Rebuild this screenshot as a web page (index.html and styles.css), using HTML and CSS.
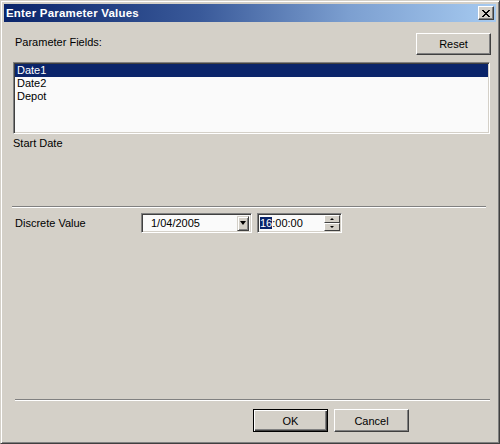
FILE: index.html
```html
<!DOCTYPE html>
<html>
<head>
<meta charset="utf-8">
<link rel="stylesheet" href="styles.css">
</head>
<body>
<div class="window">
  <div class="titlebar">
    <span class="title">Enter Parameter Values</span>
    <div class="close">
      <svg width="8" height="7" viewBox="0 0 8 7"><path d="M0 0h2v1h1v1h2v-1h1v-1h2v1h-1v1h-1v1h-1v1h1v1h1v1h1v1h-2v-1h-1v-1h-2v1h-1v1h-2v-1h1v-1h1v-1h1v-1h-1v-1h-1v-1h-1z" fill="#000"/></svg>
    </div>
  </div>
  <div class="content">
    <div class="toprow">
      <span class="label fields-label">Parameter Fields:</span>
      <div class="btn reset">Reset</div>
    </div>
    <div class="listbox">
      <div class="item selected">Date1</div>
      <div class="item">Date2</div>
      <div class="item">Depot</div>
    </div>
    <div class="label caption">Start Date</div>
    <div class="sep sep-top"></div>
    <div class="valuerow">
      <span class="label value-label">Discrete Value</span>
      <div class="field combo">
        <span class="combo-text">1/04/2005</span>
        <div class="dropbtn"><span class="tri-down"></span></div>
      </div>
      <div class="field timefield">
        <span class="time-text"><span class="hl">16</span>:00:00</span>
        <div class="spin">
          <div class="spinbtn"><span class="tri-up small"></span></div>
          <div class="spinbtn"><span class="tri-down small"></span></div>
        </div>
      </div>
    </div>
    <div class="filler"></div>
    <div class="sep sep-bottom"></div>
    <div class="buttons">
      <div class="btn default">OK</div>
      <div class="btn">Cancel</div>
    </div>
  </div>
</div>
</body>
</html>
```
FILE: styles.css
```css
html, body {
  margin: 0;
  padding: 0;
  background: #d4d0c8;
}
.window {
  width: 500px;
  height: 444px;
  box-sizing: border-box;
  background: #d4d0c8;
  border-top: 1px solid #d4d0c8;
  border-left: 1px solid #d4d0c8;
  border-right: 1px solid #404040;
  border-bottom: 1px solid #404040;
  box-shadow: inset 1px 1px 0 #ffffff, inset -1px -1px 0 #808080;
  padding: 3px 3px 3px 3px;
  display: flex;
  flex-direction: column;
  font-family: "Liberation Sans", Arial, sans-serif;
  font-size: 11px;
  color: #000;
}
.titlebar {
  height: 18px;
  flex: none;
  background: linear-gradient(to right, #0a246a 0%, #3a5a9a 40%, #7c9fd0 70%, #a6caf0 100%);
  display: flex;
  align-items: center;
  justify-content: space-between;
  padding: 0 2px 0 2px;
}
.title {
  color: #fff;
  font-weight: bold;
  font-size: 11.5px;
  letter-spacing: 0.2px;
}
.close {
  width: 16px;
  height: 14px;
  box-sizing: border-box;
  background: #d4d0c8;
  border-top: 1px solid #fff;
  border-left: 1px solid #fff;
  border-right: 1px solid #404040;
  border-bottom: 1px solid #404040;
  box-shadow: inset -1px -1px 0 #808080;
  display: flex;
  align-items: center;
  justify-content: center;
}
.content {
  flex: 1;
  display: flex;
  flex-direction: column;
  padding: 11px 6px 8px 9px;
}
.toprow {
  display: flex;
  justify-content: space-between;
  align-items: flex-start;
  height: 22px;
}
.label {
  line-height: 13px;
}
.fields-label {
  margin-top: 3px;
  margin-left: 2px;
}
.btn {
  width: 75px;
  height: 23px;
  box-sizing: border-box;
  background: #d4d0c8;
  border-top: 1px solid #fff;
  border-left: 1px solid #fff;
  border-right: 1px solid #404040;
  border-bottom: 1px solid #404040;
  box-shadow: inset -1px -1px 0 #808080;
  display: flex;
  align-items: center;
  justify-content: center;
  font-size: 11px;
}
.reset {
  height: 22px;
  margin-right: -1px;
}
.listbox {
  margin-top: 7px;
  height: 72px;
  box-sizing: border-box;
  background: #fafafa;
  border-top: 1px solid #808080;
  border-left: 1px solid #808080;
  border-right: 1px solid #fff;
  border-bottom: 1px solid #fff;
  box-shadow: inset 1px 1px 0 #404040, inset -1px -1px 0 #d4d0c8;
  padding: 1px;
}
.item {
  height: 13px;
  line-height: 13px;
  padding-left: 2px;
  font-size: 11px;
}
.item.selected {
  background: #0a246a;
  color: #fff;
}
.caption {
  margin-top: 3px;
}
.sep {
  border-top: 1px solid #808080;
  border-bottom: 1px solid #fff;
  height: 0;
}
.sep-top {
  margin-top: 56px;
  margin-left: -1px;
  margin-right: 4px;
}
.valuerow {
  margin-top: 5px;
  display: flex;
  align-items: center;
  height: 20px;
}
.value-label {
  margin-left: 2px;
  width: 126px;
}
.field {
  height: 20px;
  box-sizing: border-box;
  background: #fafafa;
  border-top: 1px solid #808080;
  border-left: 1px solid #808080;
  border-right: 1px solid #fff;
  border-bottom: 1px solid #fff;
  box-shadow: inset 1px 1px 0 #404040, inset -1px -1px 0 #d4d0c8;
  padding: 2px;
  display: flex;
  align-items: center;
}
.combo {
  width: 111px;
}
.combo-text {
  flex: 1;
  padding-left: 7px;
}
.dropbtn {
  width: 12px;
  height: 15px;
  box-sizing: border-box;
  background: #d4d0c8;
  border-top: 1px solid #d4d0c8;
  border-left: 1px solid #d4d0c8;
  border-right: 1px solid #404040;
  border-bottom: 1px solid #404040;
  box-shadow: inset 1px 1px 0 #fff, inset -1px -1px 0 #808080;
  display: flex;
  align-items: center;
  justify-content: center;
}
.tri-down {
  width: 0;
  height: 0;
  border-left: 3.5px solid transparent;
  border-right: 3.5px solid transparent;
  border-top: 4px solid #000;
}
.tri-up {
  width: 0;
  height: 0;
  border-left: 3.5px solid transparent;
  border-right: 3.5px solid transparent;
  border-bottom: 4px solid #000;
}
.tri-up.small {
  border-left-width: 2px;
  border-right-width: 2px;
  border-bottom-width: 2px;
}
.tri-down.small {
  border-left-width: 2px;
  border-right-width: 2px;
  border-top-width: 2px;
}
.timefield {
  width: 85px;
  margin-left: 5px;
  padding-right: 1px;
}
.time-text {
  flex: 1;
  padding-left: 0;
}
.hl {
  background: #0a246a;
  color: #fff;
}
.spin {
  width: 16px;
  height: 16px;
  display: flex;
  flex-direction: column;
}
.spinbtn {
  flex: 1;
  box-sizing: border-box;
  background: #d4d0c8;
  border-top: 1px solid #fff;
  border-left: 1px solid #fff;
  border-right: 1px solid #404040;
  border-bottom: 1px solid #404040;
  display: flex;
  align-items: center;
  justify-content: center;
}
.filler {
  flex: 1;
}
.sep-bottom {
  margin-left: 2px;
  margin-right: 0;
}
.buttons {
  margin-top: 8px;
  display: flex;
  gap: 6px;
  padding-left: 240px;
}
.btn.default {
  border: 1px solid #000;
  box-shadow: inset 1px 1px 0 #fff, inset -1px -1px 0 #404040, inset -2px -2px 0 #808080;
}
```
